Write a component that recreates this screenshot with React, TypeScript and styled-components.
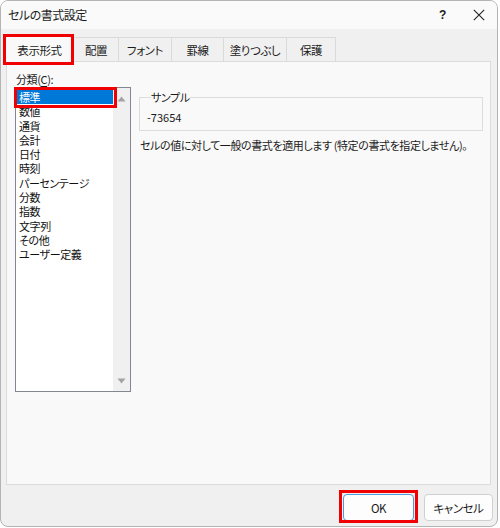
import React from "react";
import styled, { createGlobalStyle } from "styled-components";

const GlobalStyle = createGlobalStyle`
  html, body {
    margin: 0;
    padding: 0;
    background: #ffffff;
  }
  * {
    box-sizing: border-box;
  }
`;

const FONT = `"Noto Sans CJK JP", "Noto Sans", sans-serif`;
const RED = "#f00000";

const Window = styled.div`
  width: 498px;
  height: 527px;
  border: 1px solid #b4b4b4;
  border-radius: 8px;
  background: #f0f0f0;
  overflow: hidden;
  display: flex;
  flex-direction: column;
  font-family: ${FONT};
  font-size: 11px;
  letter-spacing: -0.4px;
  font-feature-settings: "palt";
  color: #1b1b1b;
`;

const TitleBar = styled.div`
  height: 28px;
  background: #fafafa;
  display: flex;
  align-items: center;
  padding: 0 12px 0 7px;
`;

const Title = styled.span`
  flex: 1;
  font-size: 12px;
  letter-spacing: -0.5px;
  line-height: 14px;
`;

const HelpMark = styled.span`
  font-family: "Liberation Sans", sans-serif;
  font-weight: bold;
  font-size: 12px;
  width: 34px;
  color: #222;
`;

const TabStrip = styled.div`
  display: flex;
  align-items: flex-end;
  height: 32px;
  padding-left: 4px;
`;

const Tab = styled.div<{ $w: number; $active?: boolean }>`
  position: relative;
  width: ${(p) => p.$w}px;
  height: ${(p) => (p.$active ? 26 : 24)}px;
  margin-right: -1px;
  border: 1px solid #dadada;
  border-bottom: none;
  background: ${(p) => (p.$active ? "#f9f9f9" : "#f0f0f0")};
  display: flex;
  align-items: center;
  justify-content: center;
  font-size: 11.5px;
  z-index: ${(p) => (p.$active ? 2 : 1)};
  margin-bottom: ${(p) => (p.$active ? -1 : 0)}px;
`;

const Highlight = styled.div<{ $t: number; $l: number; $r: number; $b: number }>`
  position: absolute;
  top: ${(p) => p.$t}px;
  left: ${(p) => p.$l}px;
  right: ${(p) => p.$r}px;
  bottom: ${(p) => p.$b}px;
  border: 3px solid ${RED};
  pointer-events: none;
  z-index: 5;
`;

const Panel = styled.div`
  margin: 0 5px 0 5px;
  width: 485px;
  height: 424px;
  border: 1px solid #dcdcdc;
  background: #f9f9f9;
  display: flex;
  gap: 8px;
  padding: 10px 0 0 8px;
`;

const LeftColumn = styled.div`
  display: flex;
  flex-direction: column;
  width: 116px;
`;

const Label = styled.div`
  line-height: 15px;
  height: 15px;
  padding-left: 1px;
  u {
    text-underline-offset: 2px;
  }
`;

const ListBox = styled.div`
  position: relative;
  width: 116px;
  height: 305px;
  border: 1px solid #828790;
  background: #ffffff;
  display: flex;
`;

const Items = styled.ul`
  flex: 1;
  list-style: none;
  margin: 0;
  padding: 2px 0 0 1px;
`;

const Item = styled.li<{ $selected?: boolean }>`
  height: 14.3px;
  line-height: 14.3px;
  padding-left: 2px;
  background: ${(p) => (p.$selected ? "#0078d7" : "transparent")};
  color: ${(p) => (p.$selected ? "#ffffff" : "#111111")};
`;

const ScrollBar = styled.div`
  width: 17px;
  background: #f0f0f0;
  display: flex;
  flex-direction: column;
  justify-content: space-between;
  align-items: center;
  padding: 8px 0 7px;
`;

const RightColumn = styled.div`
  display: flex;
  flex-direction: column;
  width: 344px;
  padding-top: 18px;
`;

const SampleBox = styled.fieldset`
  margin: 0;
  height: 41px;
  border: 1px solid #dcdcdc;
  padding: 0 0 0 7px;
  legend {
    padding: 0;
    margin-left: 4px;
    line-height: 14px;
  }
`;

const SampleValue = styled.div`
  line-height: 14px;
  padding-top: 6px;
  letter-spacing: 0;
`;

const Description = styled.div`
  margin-top: 7px;
  padding-left: 1px;
  line-height: 14px;
  white-space: nowrap;
`;

const ButtonBar = styled.div`
  flex: 1;
  display: flex;
  justify-content: flex-end;
  align-items: flex-start;
  gap: 10px;
  padding: 9px 4px 0 0;
`;

const Button = styled.button<{ $w: number; $default?: boolean }>`
  position: relative;
  width: ${(p) => p.$w}px;
  height: 27px;
  border-radius: 4px;
  border: 1px solid ${(p) => (p.$default ? "#4f9ad9" : "#d0d0d0")};
  background: #fdfdfd;
  font-family: ${FONT};
  font-size: 11.5px;
  letter-spacing: -0.4px;
  font-feature-settings: "palt";
  color: #1b1b1b;
  padding: 0;
`;

const tabs = [
  { label: "表示形式", w: 69, active: true },
  { label: "配置", w: 46 },
  { label: "フォント", w: 54 },
  { label: "罫線", w: 53 },
  { label: "塗りつぶし", w: 64 },
  { label: "保護", w: 50 },
];

const categories = [
  "標準",
  "数値",
  "通貨",
  "会計",
  "日付",
  "時刻",
  "パーセンテージ",
  "分数",
  "指数",
  "文字列",
  "その他",
  "ユーザー定義",
];

const Arrow = ({ up }: { up?: boolean }) => (
  <svg width="9" height="6" viewBox="0 0 9 6">
    <path d={up ? "M0.5 5.5 L4.5 0.5 L8.5 5.5 Z" : "M0.5 0.5 L4.5 5.5 L8.5 0.5 Z"} fill="#a3a3a3" />
  </svg>
);

const CloseIcon = () => (
  <svg width="12" height="12" viewBox="0 0 12 12">
    <path d="M0.8 0.8 L11.2 11.2 M11.2 0.8 L0.8 11.2" stroke="#222" strokeWidth="1.1" />
  </svg>
);

export default function App() {
  return (
    <>
      <GlobalStyle />
      <Window>
        <TitleBar>
          <Title>セルの書式設定</Title>
          <HelpMark>?</HelpMark>
          <CloseIcon />
        </TitleBar>
        <TabStrip>
          {tabs.map((t) => (
            <Tab key={t.label} $w={t.w} $active={t.active}>
              {t.label}
              {t.active && <Highlight $t={-3} $l={-3} $r={-1} $b={-3} />}
            </Tab>
          ))}
        </TabStrip>
        <Panel>
          <LeftColumn>
            <Label>
              分類(<u>C</u>):
            </Label>
            <ListBox>
              <Items>
                {categories.map((c, i) => (
                  <Item key={c} $selected={i === 0}>
                    {c}
                  </Item>
                ))}
              </Items>
              <ScrollBar>
                <Arrow up />
                <Arrow />
              </ScrollBar>
              <Highlight $t={-1} $l={-2} $r={13} $b={283} />
            </ListBox>
          </LeftColumn>
          <RightColumn>
            <SampleBox>
              <legend>サンプル</legend>
              <SampleValue>-73654</SampleValue>
            </SampleBox>
            <Description>
              セルの値に対して一般の書式を適用します (特定の書式を指定しません)。
            </Description>
          </RightColumn>
        </Panel>
        <ButtonBar>
          <Button $w={71} $default>
            OK
            <Highlight $t={-5} $l={-5} $r={-5} $b={-3} />
          </Button>
          <Button $w={69}>キャンセル</Button>
        </ButtonBar>
      </Window>
    </>
  );
}
